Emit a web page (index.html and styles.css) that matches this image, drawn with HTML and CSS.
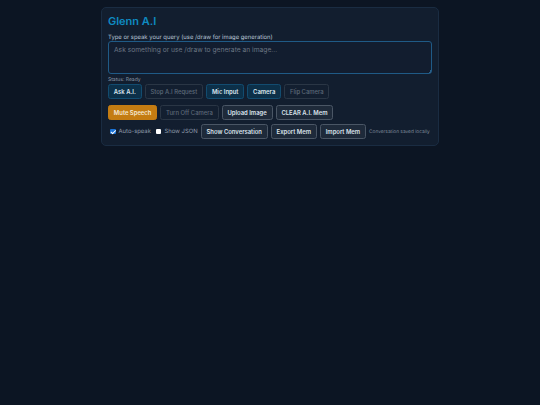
FILE: index.html
```html
<!DOCTYPE html>
<html lang="en">
<head>
    <meta charset="UTF-8">
    <title>Glenn A.I</title>
    <link rel="stylesheet" href="styles.css">
</head>
<body>
    <div class="card">
        <div class="title">Glenn A.I</div>
        <label class="query-label" for="query">Type or speak your query (use /draw for image generation)</label>
        <textarea class="query-input" id="query" placeholder="Ask something or use /draw to generate an image..."></textarea>
        <div class="status">Status: Ready</div>

        <div class="controls">
            <button class="btn btn-blue">Ask A.I.</button>
            <button class="btn btn-off">Stop A.I Request</button>
            <button class="btn btn-blue">Mic Input</button>
            <button class="btn btn-blue">Camera</button>
            <button class="btn btn-off">Flip Camera</button>
        </div>

        <div class="controls controls-second">
            <button class="btn btn-orange">Mute Speech</button>
            <button class="btn btn-off">Turn Off Camera</button>
            <button class="btn btn-grey">Upload Image</button>
            <button class="btn btn-grey">CLEAR A.I. Mem</button>
        </div>

        <div class="controls controls-third">
            <label class="check check-auto"><input type="checkbox" checked>Auto-speak</label>
            <label class="check check-json"><input type="checkbox">Show JSON</label>
            <button class="btn btn-grey">Show Conversation</button>
            <button class="btn btn-grey">Export Mem</button>
            <button class="btn btn-grey">Import Mem</button>
            <span class="saved">Conversation saved locally</span>
        </div>
    </div>
</body>
</html>
```

FILE: styles.css
```css
* {
    margin: 0;
    padding: 0;
    box-sizing: border-box;
}

body {
    font-family: Inter, 'Liberation Sans', sans-serif;
    text-rendering: geometricPrecision;
    background: #0c1523;
    color: #cbd5e1;
    min-height: 100vh;
    padding: 7px 101px 0;
}

.card {
    height: 139px;
    background: #121e2f;
    border: 1px solid #1a2c42;
    border-radius: 5px;
    padding: 6px 6px 0;
}

.title {
    font-size: 11px;
    font-weight: 600;
    line-height: 15px;
    color: #0e8bc2;
}

.query-label {
    display: block;
    margin-top: 5px;
    font-size: 5.9px;
    line-height: 8px;
    color: #b6c2d2;
}

.query-input {
    display: block;
    width: 100%;
    height: 33px;
    margin-top: -1px;
    padding: 4px 5px;
    background: #121d2f;
    border: 1px solid #1f5a86;
    border-radius: 3px;
    font-family: inherit;
    font-size: 6.7px;
    color: #cbd5e1;
}

.query-input::placeholder {
    color: #6b7684;
}

.query-input::-webkit-resizer {
    background: linear-gradient(135deg, transparent 50%, #2a5f88 50%) right bottom / 3px 3px no-repeat;
}

.status {
    margin-top: 3px;
    height: 7px;
    font-size: 5px;
    line-height: 7px;
    color: #8f9bab;
}

.controls {
    display: flex;
    align-items: center;
    gap: 3px;
}

.controls-second {
    margin-top: 6px;
}

.controls-third {
    margin-top: 4px;
}

.btn {
    flex: none;
    height: 15px;
    padding: 0 4.85px;
    border-radius: 2.5px;
    border: 1px solid;
    font-family: inherit;
    font-size: 5.9px;
    font-weight: 600;
    white-space: nowrap;
}

.btn-blue {
    background: #0c3049;
    border-color: #124c70;
    color: #dbe6f0;
}

.btn-off {
    background: #131f30;
    border-color: #2a3645;
    color: #5e6a79;
    font-weight: 500;
}

.btn-orange {
    background: #c47c12;
    border-color: #c47c12;
    color: #f5e9d5;
}

.btn-grey {
    background: #1e2a3a;
    border-color: #4a5665;
    color: #dbe3ec;
}

.check {
    flex: none;
    display: flex;
    align-items: center;
    gap: 3px;
    font-size: 5.9px;
    white-space: nowrap;
    color: #8e9aaa;
}

.check-auto {
    margin-left: 2px;
    margin-right: 2px;
}

.check input {
    appearance: none;
    position: relative;
    width: 5.5px;
    height: 5.5px;
    background: #fff;
    border-radius: 1px;
}

.check input:checked {
    background: #1a73d8;
}

.check input:checked::after {
    content: "";
    position: absolute;
    left: 1.7px;
    top: 0.5px;
    width: 2px;
    height: 3.5px;
    border: solid #fff;
    border-width: 0 1px 1px 0;
    transform: rotate(45deg);
}

.saved {
    flex: none;
    white-space: nowrap;
    font-size: 4.8px;
    color: #7f8b9a;
}
```
